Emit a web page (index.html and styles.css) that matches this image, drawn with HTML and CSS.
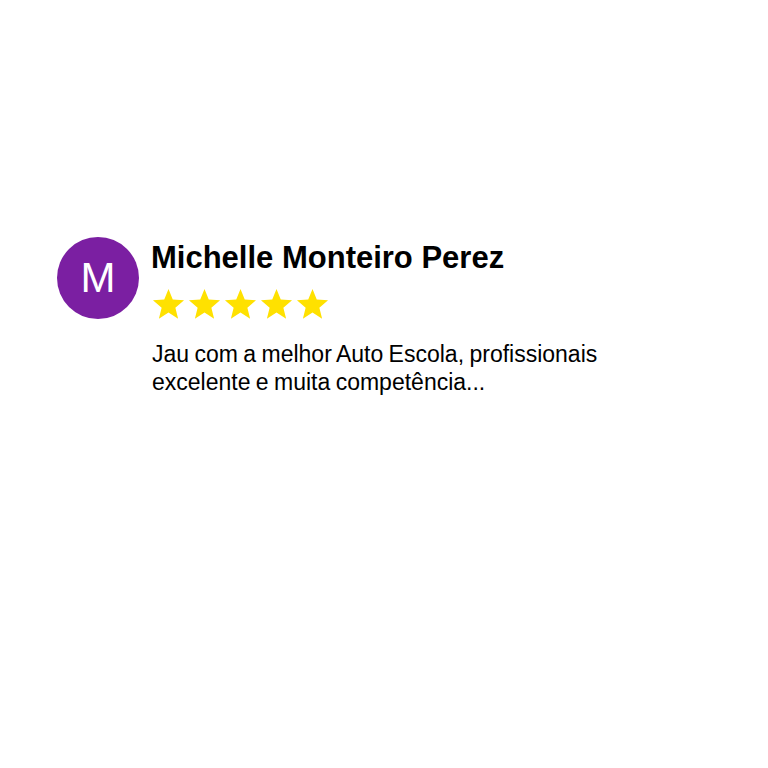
FILE: index.html
```html
<!doctype html>
<html lang="pt">
<head>
    <meta charset="UTF-8">
    <title>Avaliação</title>
    <link rel="stylesheet" href="styles.css">
</head>
<body>
<div class="review">
    <div class="avatar">M</div>
    <div class="review-body">
        <h4 class="author">Michelle Monteiro Perez</h4>
        <div class="stars">
            <svg viewBox="0 0 24 24"><path d="M12 1.5l3.1 7.6 8.2.6-6.3 5.3 2 8-7-4.4-7 4.4 2-8L.7 9.7l8.2-.6z"/></svg>
            <svg viewBox="0 0 24 24"><path d="M12 1.5l3.1 7.6 8.2.6-6.3 5.3 2 8-7-4.4-7 4.4 2-8L.7 9.7l8.2-.6z"/></svg>
            <svg viewBox="0 0 24 24"><path d="M12 1.5l3.1 7.6 8.2.6-6.3 5.3 2 8-7-4.4-7 4.4 2-8L.7 9.7l8.2-.6z"/></svg>
            <svg viewBox="0 0 24 24"><path d="M12 1.5l3.1 7.6 8.2.6-6.3 5.3 2 8-7-4.4-7 4.4 2-8L.7 9.7l8.2-.6z"/></svg>
            <svg viewBox="0 0 24 24"><path d="M12 1.5l3.1 7.6 8.2.6-6.3 5.3 2 8-7-4.4-7 4.4 2-8L.7 9.7l8.2-.6z"/></svg>
        </div>
        <p class="text">Jau com a melhor Auto Escola, profissionais<br>excelente e muita competência...</p>
    </div>
</div>
</body>
</html>
```

FILE: styles.css
```css
body {
    margin: 0;
    background: #fff;
    font-family: "Liberation Sans", Arial, sans-serif;
    color: #000;
}

.review {
    display: flex;
    gap: 12px;
    padding: 237px 0 0 57px;
}

.avatar {
    flex: none;
    width: 82px;
    height: 82px;
    border-radius: 50%;
    background-color: #7b1fa2;
    color: #fff;
    font-size: 42px;
    line-height: 82px;
    text-align: center;
}

.review-body {
    padding-top: 3px;
}

.author {
    margin: 0;
    font-size: 31px;
    line-height: 36px;
    font-weight: bold;
}

.stars {
    display: flex;
    gap: 3px;
    margin: 11px 0 0 1px;
}

.stars svg {
    width: 33px;
    height: 33px;
    fill: #ffe100;
}

.text {
    margin: 20px 0 0 1px;
    font-size: 23px;
    line-height: 28px;
    word-spacing: -1px;
}
```
